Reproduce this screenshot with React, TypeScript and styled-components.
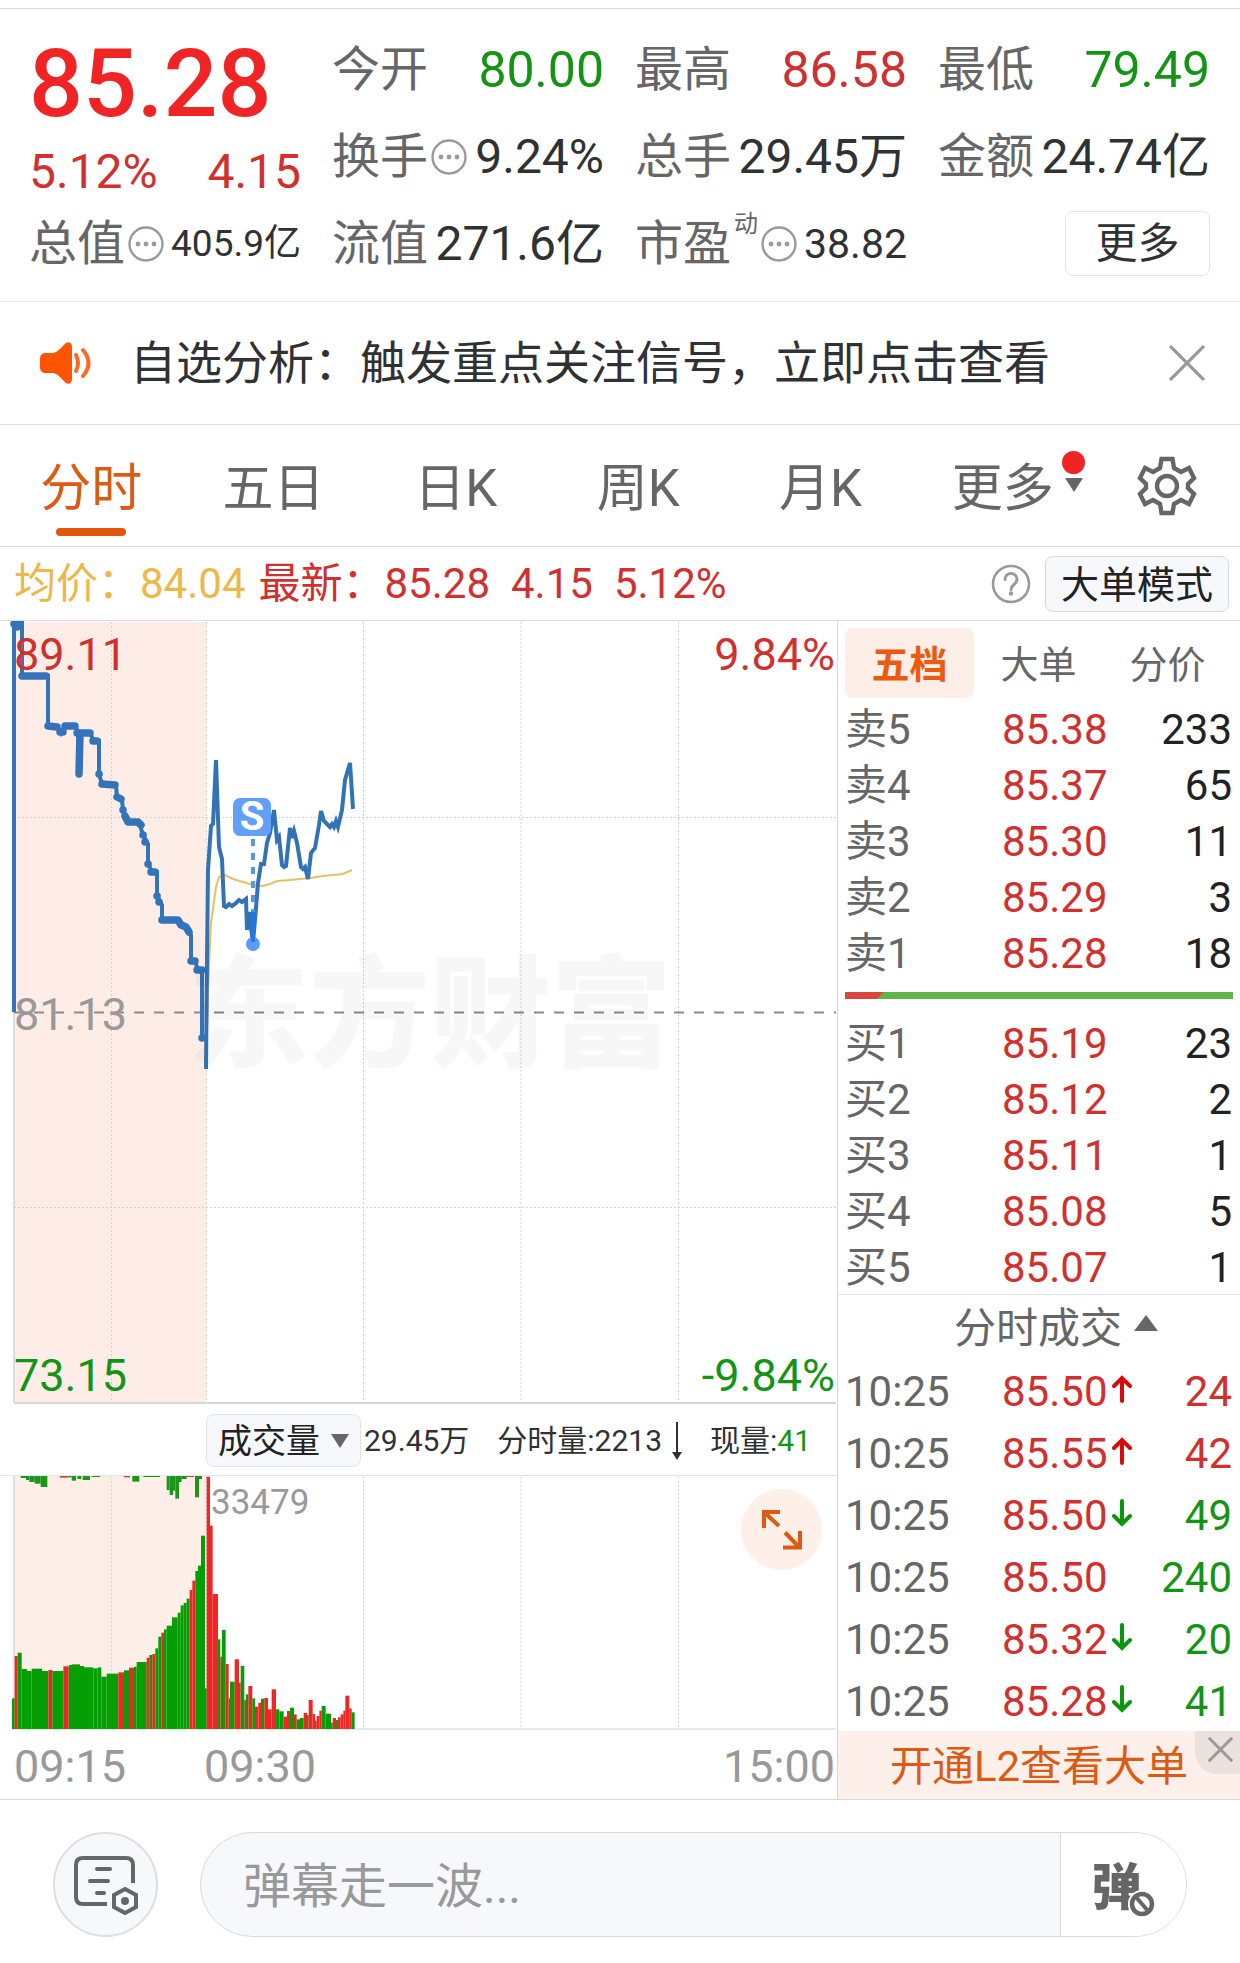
import React from "react";
import styled, { createGlobalStyle, css } from "styled-components";

const color = {
  red: "#d0312f",
  bright: "#f02424",
  green: "#149414",
  label: "#666666",
  text: "#303133",
  muted: "#999999",
  orange: "#dd5a12",
  blush: "#fdeee8",
  fill: "#f6f8fb",
  line: "#dcdcdc",
  edge: "#d5d9de",
};

const GlobalStyle = createGlobalStyle`
  * { box-sizing: border-box; }
  body {
    margin: 0;
    background: #fff;
    color: ${color.text};
    font-family: Roboto, "Noto Sans CJK SC", sans-serif;
  }
  button, input, select {
    font: inherit;
    color: inherit;
    margin: 0;
    padding: 0;
    border: 0;
    background: none;
  }
  svg { display: block; }
`;

type Tone = "red" | "green" | "text" | "muted";

const Page = styled.main`
  padding-top: 8px;
`;

/* ---------- quote summary ---------- */

const Summary = styled.section`
  display: grid;
  grid-template-columns: repeat(4, minmax(0, 1fr));
  grid-auto-rows: 87px;
  column-gap: 31px;
  padding: 17px 30px 14px 29px;
  border-top: 1px solid ${color.edge};
  border-bottom: 1px solid #ebebeb;
`;

const PriceBlock = styled.div`
  grid-row: span 2;
  display: flex;
  flex-direction: column;
  padding-top: 8px;
`;

const BigPrice = styled.strong`
  font-size: 95px;
  line-height: 100px;
  font-weight: 500;
  color: ${color.bright};
`;

const Change = styled.div`
  display: flex;
  justify-content: space-between;
  font-size: 48px;
  line-height: 76px;
  color: ${color.red};
`;

const Stat = styled.div`
  display: flex;
  align-items: center;
  justify-content: space-between;
  line-height: 64px;
  white-space: nowrap;
`;

const StatLabel = styled.span`
  display: flex;
  align-items: center;
  height: 64px;
  gap: 3px;
  font-size: 48px;
  color: ${color.label};
`;

const Sup = styled.span`
  align-self: flex-start;
  font-size: 24px;
  line-height: 24px;
`;

const StatValue = styled.span<{ $tone: Tone; $size: number }>`
  font-size: ${(p) => p.$size}px;
  color: ${(p) => color[p.$tone]};
`;

const MoreCell = styled.div`
  display: flex;
  align-items: center;
  justify-content: flex-end;
`;

const MoreButton = styled.button`
  width: 145px;
  height: 65px;
  border: 1px solid #e3e5e7;
  border-radius: 8px;
  font-size: 42px;
  line-height: 60px;
`;

/* ---------- notice ---------- */

const Notice = styled.section`
  display: flex;
  align-items: center;
  height: 123px;
  padding: 0 35px 0 38px;
  border-bottom: 1px solid ${color.line};
`;

const NoticeText = styled.p`
  flex: 1;
  margin: 0 0 0 38px;
  font-size: 46px;
  line-height: 64px;
  white-space: nowrap;
`;

const IconButton = styled.button`
  display: flex;
  align-items: center;
  justify-content: center;
`;

/* ---------- period tabs ---------- */

const Tabs = styled.nav`
  display: flex;
  height: 122px;
  border-bottom: 1px solid ${color.line};
`;

const Tab = styled.button<{ $active?: boolean }>`
  position: relative;
  flex: 1;
  padding-top: 6px;
  font-size: 51px;
  line-height: 60px;
  color: ${(p) => (p.$active ? color.orange : color.label)};
  ${(p) =>
    p.$active &&
    css`
      &::after {
        content: "";
        position: absolute;
        left: calc(50% - 35px);
        bottom: 10px;
        width: 70px;
        height: 8px;
        border-radius: 4px;
        background: #e2560c;
      }
    `}
`;

const Dot = styled.i`
  position: absolute;
  right: 9px;
  top: 26px;
  width: 23px;
  height: 23px;
  border-radius: 50%;
  background: ${color.bright};
`;

const TabCaret = styled.i`
  position: absolute;
  right: 11px;
  top: 53px;
  border: 9px solid transparent;
  border-top: 14px solid ${color.label};
  border-bottom: 0;
`;

const Settings = styled(IconButton)`
  width: 146px;
`;

/* ---------- price line ---------- */

const InfoBar = styled.section`
  display: flex;
  align-items: center;
  height: 74px;
  padding: 0 11px 0 14px;
  border-bottom: 1px solid ${color.line};
  font-size: 42px;
  line-height: 60px;
  white-space: nowrap;
`;

const Average = styled.span`
  margin-right: 13px;
  color: #edb84a;
`;

const Latest = styled.span`
  display: flex;
  flex: 1;
  gap: 21px;
  color: ${color.red};
`;

const ModeButton = styled.button`
  height: 56px;
  margin-left: 14px;
  padding: 2px 15px 0;
  border: 1px solid ${color.edge};
  border-radius: 8px;
  background: ${color.fill};
  font-size: 38px;
  line-height: 50px;
  color: #222;
`;

/* ---------- charts ---------- */

const Board = styled.div`
  display: grid;
  grid-template-columns: minmax(0, 1fr) 403px;
  border-bottom: 1px solid ${color.edge};
`;

const Charts = styled.section`
  display: flex;
  flex-direction: column;
`;

const Plot = styled.div<{ $height: number }>`
  position: relative;
  height: ${(p) => p.$height}px;
  svg.plot {
    width: 100%;
    height: 100%;
  }
`;

const AxisText = styled.span<{ $tone: Tone; $right?: boolean; $top: number }>`
  position: absolute;
  top: ${(p) => p.$top}px;
  ${(p) => (p.$right ? "right: 2px;" : "left: 14px;")}
  font-size: 45px;
  line-height: 52px;
  color: ${(p) => color[p.$tone]};
`;

const Watermark = styled.span`
  position: absolute;
  left: 188px;
  top: 325px;
  font-size: 121px;
  line-height: 140px;
  font-weight: 900;
  color: rgba(0, 0, 0, 0.03);
  white-space: nowrap;
`;

const SellMark = styled.span`
  position: absolute;
  left: 233px;
  top: 177px;
  width: 38px;
  height: 38px;
  border-radius: 7px;
  background: #629ff8;
  color: #fff;
  font-size: 40px;
  line-height: 38px;
  font-weight: 700;
  text-align: center;
`;

const VolumeBar = styled.div`
  display: flex;
  align-items: center;
  height: 72px;
  padding: 2px 0 0 206px;
  border-bottom: 1px solid #e6e6e6;
  font-size: 30px;
  line-height: 52px;
  white-space: nowrap;
`;

const SelectBox = styled.label`
  position: relative;
  display: flex;
  margin-right: 3px;
  &::after {
    content: "";
    position: absolute;
    right: 12px;
    top: 20px;
    border: 9px solid transparent;
    border-top: 14px solid ${color.label};
    border-bottom: 0;
    pointer-events: none;
  }
`;

const IndicatorSelect = styled.select`
  appearance: none;
  width: 155px;
  height: 53px;
  padding: 0 0 2px 11px;
  border: 1px solid #e1e5ea;
  border-radius: 8px;
  background: ${color.fill};
  font-size: 34px;
  color: #222;
`;

const VolumeItem = styled.span`
  display: flex;
  align-items: center;
  gap: 10px;
  margin-right: 28px;
`;

const Now = styled.b`
  margin-left: -10px;
  font-weight: 400;
  color: ${color.green};
`;

const MaxVolume = styled.span`
  position: absolute;
  left: 211px;
  top: 7px;
  font-size: 35px;
  line-height: 40px;
  color: ${color.muted};
`;

const Expand = styled.button`
  position: absolute;
  right: 15px;
  top: 13px;
  width: 81px;
  height: 81px;
  padding: 20px;
  border-radius: 50%;
  background: #fef0e9;
`;

const TimeAxis = styled.div`
  display: grid;
  grid-template-columns: 190px 1fr auto;
  height: 69px;
  padding: 0 2px 0 14px;
  font-size: 45px;
  line-height: 73px;
  color: ${color.muted};
`;

/* ---------- order book ---------- */

const Side = styled.aside`
  border-left: 1px solid ${color.edge};
`;

const SideTabs = styled.div`
  display: flex;
  padding: 7px 8px 2px 7px;
`;

const SideTab = styled.button<{ $active?: boolean }>`
  flex: 1;
  height: 70px;
  padding-top: 4px;
  border-radius: 8px;
  font-size: 38px;
  line-height: 60px;
  font-weight: ${(p) => (p.$active ? 700 : 400)};
  color: ${(p) => (p.$active ? "#ea5b10" : color.label)};
  background: ${(p) => (p.$active ? color.blush : "transparent")};
`;

const Quotes = styled.table<{ $row: number }>`
  width: 100%;
  table-layout: fixed;
  border-collapse: collapse;
  font-size: 42px;
  line-height: 50px;
  th,
  td {
    height: ${(p) => p.$row}px;
    padding: 4px 0 0;
    font-weight: 400;
    text-align: left;
    white-space: nowrap;
  }
  th {
    width: 164px;
    padding-left: 7px;
    color: ${color.label};
  }
`;

const Price = styled.td`
  color: ${color.red};
  svg {
    display: inline-block;
    margin-left: 4px;
    vertical-align: 3px;
  }
`;

const Count = styled.td<{ $tone: Tone }>`
  && {
    width: 90px;
    padding-right: 8px;
    text-align: right;
    color: ${(p) => (p.$tone === "text" ? "#222" : color[p.$tone])};
  }
`;

const Ratio = styled.div`
  height: 7px;
  margin: 12px 7px 15px;
  background: linear-gradient(135deg, #d9453f 27px, #5fb548 28px);
`;

const TradesHead = styled.button`
  display: flex;
  align-items: center;
  justify-content: center;
  gap: 12px;
  width: 100%;
  height: 65px;
  padding: 4px 0 0 34px;
  border-top: 1px solid #e6e6e6;
  font-size: 42px;
  line-height: 60px;
  color: ${color.label};
`;

const UpCaret = styled.i`
  margin-bottom: 12px;
  border: 12px solid transparent;
  border-bottom: 16px solid ${color.label};
  border-top: 0;
`;

const Promo = styled.div`
  position: relative;
  height: 68px;
  padding-top: 3px;
  background: #fdf0ea;
  text-align: center;
`;

const PromoLink = styled.a`
  font-size: 42px;
  line-height: 65px;
  color: ${color.orange};
  text-decoration: none;
`;

const PromoClose = styled(IconButton)`
  position: absolute;
  right: 0;
  top: 0;
  width: 45px;
  height: 43px;
  padding: 0 0 6px 6px;
  border-bottom-left-radius: 22px;
  background: #ebe2dd;
`;

/* ---------- comment bar ---------- */

const Composer = styled.form`
  display: flex;
  align-items: center;
  gap: 42px;
  padding: 32px 53px 26px;
`;

const NoteButton = styled(IconButton)`
  width: 105px;
  height: 105px;
  border: 2px solid #dcdee2;
  border-radius: 50%;
  background: ${color.fill};
`;

const Field = styled.div`
  display: flex;
  flex: 1;
  height: 105px;
  border: 1px solid ${color.edge};
  border-radius: 53px;
  background: ${color.fill};
  overflow: hidden;
`;

const CommentInput = styled.input`
  flex: 1;
  min-width: 0;
  padding: 4px 0 0 42px;
  font-size: 48px;
  outline: 0;
  &::placeholder {
    color: ${color.muted};
    opacity: 1;
  }
`;

const Danmu = styled.button`
  position: relative;
  width: 126px;
  padding: 0 14px 4px 0;
  border-left: 1px solid ${color.edge};
  background: #fff;
  font-size: 50px;
  font-weight: 900;
  color: ${color.label};
  svg {
    position: absolute;
    left: 66px;
    top: 56px;
  }
`;

/* ---------- icons ---------- */

const MoreDots = () => (
  <svg width="36" height="36" viewBox="0 0 36 36" fill="none">
    <circle cx="18" cy="16" r="16" stroke="#999" strokeWidth="0" />
    <circle cx="18" cy="18" r="16.500" stroke="#999" strokeWidth="2.400" />
    <circle cx="10" cy="18" r="2.400" fill="#999" />
    <circle cx="18" cy="18" r="2.400" fill="#999" />
    <circle cx="26" cy="18" r="2.400" fill="#999" />
  </svg>
);

const Speaker = () => (
  <svg width="54" height="44" viewBox="0 0 54 44" fill="none">
    <path
      d="M8 12h7c7-2 8-6 13-10 3-2 6 0 6 4v32c0 4-3 6-6 4-5-4-6-8-13-10H8c-4 0-6-2-6-6v-8c0-4 2-6 6-6z"
      fill="#ff5500"
    />
    <path d="M38 14q4 8 0 16" stroke="#ff6a20" strokeWidth="4" strokeLinecap="round" />
    <path d="M45 9q11 13 0 26" stroke="#ff6a20" strokeWidth="4" strokeLinecap="round" />
  </svg>
);

const Cross = ({ size, weight }: { size: number; weight: number }) => (
  <svg width={size} height={size} viewBox="0 0 34 34" fill="none">
    <path d="M1 1l32 32M33 1L1 33" stroke="#999" strokeWidth={weight} />
  </svg>
);

const Gear = () => (
  <svg width="60" height="60" viewBox="0 0 60 60" fill="none" stroke={color.label} strokeWidth="4.400">
    <path d="M24.500 3h11l1.500 9 7 4 8-4 5 10-6 6v4l6 6-5 10-8-4-7 4-1.500 9h-11L23 48l-7-4-8 4-5-10 6-6v-4l-6-6 5-10 8 4 7-4z" />
    <circle cx="30" cy="30" r="10" />
  </svg>
);

const Help = () => (
  <svg width="40" height="40" viewBox="0 0 40 40" fill="none" stroke="#999">
    <circle cx="20" cy="20" r="18" strokeWidth="2.600" />
    <path d="M14 15.500c0-8 12-8 12 0 0 5-6 5-6 10" strokeWidth="3" strokeLinecap="round" />
    <circle cx="20" cy="29.500" r="1.200" strokeWidth="2" />
  </svg>
);

const ExpandIcon = () => (
  <svg width="41" height="41" viewBox="0 0 41 41" fill="none" stroke={color.orange} strokeWidth="4">
    <path d="M19 3H3v16M4 4l14 13M24 23.500L37 37M22 38.500h17V22" />
  </svg>
);

const Arrow = ({ up }: { up: boolean }) => (
  <svg width="20" height="28" viewBox="0 0 20 28" fill="none" stroke={up ? "#d90a0a" : "#0d960d"} strokeWidth="4" strokeLinecap="round">
    {up ? <path d="M10 26V3M2 11l8-8 8 8" /> : <path d="M10 2v23M2 17l8 8 8-8" />}
  </svg>
);

const ThinDown = () => (
  <svg width="10" height="38" viewBox="0 0 10 38">
    <path d="M4 0h2v30h4l-5 8-5-8h4z" fill={color.text} />
  </svg>
);

const NoteIcon = () => (
  <svg width="66" height="60" viewBox="0 0 66 60" fill="none" stroke={color.label} strokeWidth="4" strokeLinecap="round">
    <path d="M60 28V10q0-7-7-7H10q-7 0-7 7v32q0 7 7 7h24" strokeLinecap="butt" />
    <path d="M24 14h13M17 26h18M24 38h7" />
    <path d="M52 34l11 6v12l-11 6-11-6V40z" />
    <circle cx="52" cy="46" r="2" />
  </svg>
);

const Ban = () => (
  <svg width="30" height="30" viewBox="0 0 30 30" fill="none">
    <circle cx="15" cy="15" r="14" fill="#fff" />
    <circle cx="15" cy="15" r="10" stroke={color.label} strokeWidth="4.500" />
    <path d="M9 8l12 14" stroke={color.label} strokeWidth="4" />
  </svg>
);

/* ---------- chart data ---------- */

const gridX = [111.5, 206.5, 363.5, 521, 678.5];

const auctionLine =
  "M14 1012V623H22V676H48V726L58 727 61 733 65 726H75L79 733H90L94 741H99V774L102 784 116 785 117 797 122 800 123 810 128 822H139L143 835 148 844V863L152 872H157V896L162 905V920H178L186 927 191 935V961H195L198 970H202V1039";

const auctionDots =
  "M14 624H20M16 627H17M22 676H46M48 726L57 727M60 732H63M65 726H75M77 733H90M93 741H97M80 733L79 774M99 774h.1M102 784L115 785M117 797L121 799M123 810h.1M125 816L128 822H138L141 825M143 835h.1M145 842h.1M148 864h.1M151 872H155M157 896h.1M159 902h.1M162 920H178L181 925 186 927 189 932M191 961H195M197 970H202M202 1038h.1";

const tradeLine =
  "206,1069 207,960 208,870 211,826 213,824 216,760 219,847 222,859 224,906 226,907 229,904 232,906 235,904 239,900 242,902 246,899 247,930 249,912 253,943 256,908 258,883 261,864 264,864 267,843 270,833 274,810 277,840 279,837 282,865 284,867 286,866 290,828 292,838 294,831 297,843 301,867 303,869 305,867 308,879 311,853 315,848 319,825 321,811 324,821 327,824 330,827 332,824 334,827 336,821 338,827 342,810 345,780 350,763 353,809";

const averageLine =
  "206,1069 208,990 211,923 216,887 219,877 225,875 233,879 243,882 253,885 262,886 270,884 277,881 290,880 310,878 323,876 343,874 352,870";

/* each bar: left edge, right edge, top edge, rising (1) or falling (0) */
const volumes: number[][] = [
  [36, 44, 1015, 0], [44, 53, 888, 1], [53, 65, 878, 0], [65, 81, 927, 0], [81, 95, 933, 0],
  [95, 126, 926, 0], [126, 145, 933, 0], [145, 157, 930, 1], [157, 190, 933, 0], [190, 206, 919, 1],
  [206, 216, 915, 0], [216, 240, 913, 0], [240, 252, 918, 0], [252, 280, 922, 0], [280, 293, 925, 0],
  [293, 304, 922, 0], [304, 320, 950, 0], [320, 355, 941, 0], [355, 372, 937, 1], [372, 387, 931, 0],
  [387, 402, 923, 1], [402, 410, 920, 0], [410, 440, 906, 0], [440, 448, 893, 1], [448, 457, 885, 0],
  [457, 466, 882, 1], [466, 475, 865, 0], [475, 484, 830, 0], [484, 492, 818, 1], [492, 500, 808, 0],
  [500, 516, 797, 0], [516, 533, 772, 0], [533, 542, 758, 0], [542, 551, 736, 0], [551, 560, 729, 0],
  [560, 569, 716, 0], [569, 577, 690, 1], [577, 586, 662, 1], [586, 594, 633, 0], [594, 603, 617, 0],
  [603, 615, 527, 0], [615, 620, 985, 0], [620, 630, 350, 1], [630, 638, 497, 1], [638, 654, 702, 1],
  [654, 661, 838, 0], [661, 666, 890, 1], [666, 677, 810, 0], [677, 686, 912, 1], [686, 690, 1015, 1],
  [690, 704, 965, 0], [704, 717, 898, 1], [717, 722, 968, 1], [722, 733, 918, 0], [733, 738, 1020, 1],
  [738, 745, 1003, 0], [745, 757, 978, 1], [757, 765, 1015, 0], [765, 775, 1040, 1], [775, 783, 1028, 1],
  [783, 793, 1016, 0], [793, 804, 1014, 1], [804, 815, 1048, 1], [815, 828, 988, 1], [828, 838, 1048, 0],
  [838, 851, 1054, 0], [851, 861, 1070, 1], [861, 870, 1053, 1], [870, 882, 1043, 0], [882, 890, 1063, 1],
  [890, 900, 1078, 0], [900, 911, 1074, 0], [911, 921, 1059, 1], [921, 926, 1065, 0], [926, 938, 1020, 1],
  [938, 945, 1062, 1], [945, 950, 1082, 1], [950, 958, 1068, 1], [958, 965, 1052, 1], [965, 977, 1038, 0],
  [977, 993, 1061, 0], [993, 998, 1088, 0], [998, 1008, 1074, 1], [1008, 1014, 1080, 0], [1014, 1022, 1072, 1],
  [1022, 1030, 1063, 1], [1030, 1036, 1052, 1], [1036, 1048, 1007, 1], [1048, 1055, 1045, 1], [1055, 1064, 1057, 0],
];

/* unmatched orders hang from the top edge: left, right, bottom, colour flag */
const unmatched: number[][] = [
  [62, 78, 354, 0], [78, 88, 360, 0], [88, 104, 366, 0], [104, 122, 371, 0], [122, 142, 381, 0],
  [180, 205, 353, 1], [205, 215, 352, 0], [215, 228, 362, 0], [232, 244, 357, 0], [248, 270, 360, 0],
  [275, 300, 351, 0], [372, 390, 352, 1], [397, 418, 365, 0], [430, 480, 351, 0], [500, 509, 390, 0],
  [509, 519, 405, 0], [519, 526, 392, 0], [526, 537, 416, 0], [537, 545, 366, 0], [545, 560, 357, 0],
  [560, 582, 351, 1], [585, 597, 412, 0], [597, 606, 357, 0],
];

const PriceChart = () => (
  <Plot $height={783}>
    <Watermark>东方财富</Watermark>
    <svg className="plot" viewBox="0 621 837 783" preserveAspectRatio="none" fill="none">
      <rect x="14" y="622" width="192" height="781" fill="#f9b495" fillOpacity="0.24" />
      <path d="M14 1012V1403" stroke="#d4d4d4" strokeWidth="1.500" />
      <g stroke="#d2d2d2" strokeDasharray="2 2">
        {gridX.map((x) => (
          <path key={x} d={`M${x} 622V1402`} />
        ))}
        <path d="M14 817.500H836M14 1207.500H836" />
      </g>
      <path d="M14 1012.500H836" stroke="#8c8c8c" strokeWidth="2" strokeDasharray="10 10" />
      <path d="M14 1403H836" stroke="#d6d6d6" strokeWidth="2" />
      <polyline points={averageLine} stroke="#e8bf66" strokeWidth="2" />
      <path d={auctionLine} stroke="#3373ba" strokeWidth="4" />
      <path d={auctionDots} stroke="#3373ba" strokeWidth="7.500" strokeLinecap="round" strokeLinejoin="round" />
      <polyline points={tradeLine} stroke="#3373b5" strokeWidth="4" />
      <path d="M253 839V915" stroke="#5a97dd" strokeWidth="4" strokeDasharray="7 7" />
      <circle cx="253" cy="944" r="7" fill="#5a9bf5" />
      <path d="M253 912V942" stroke="#2277e6" strokeWidth="4" />
    </svg>
    <AxisText $tone="red" $top={8}>89.11</AxisText>
    <AxisText $tone="red" $top={8} $right>9.84%</AxisText>
    <AxisText $tone="muted" $top={368}>81.13</AxisText>
    <AxisText $tone="green" $top={729}>73.15</AxisText>
    <AxisText $tone="green" $top={729} $right>-9.84%</AxisText>
    <SellMark>S</SellMark>
  </Plot>
);

const VolumeChart = () => (
  <Plot $height={254}>
    <svg className="plot" viewBox="0 348 2511 762" preserveAspectRatio="none" fill="none">
      <rect x="42" y="348" width="577" height="759" fill="#fdeee8" />
      <path d="M42 348V1107" stroke="#d4d4d4" strokeWidth="4" />
      <g stroke="#d2d2d2" strokeWidth="3" strokeDasharray="6 6">
        {gridX.map((x) => (
          <path key={x} d={`M${x * 3} 350V1105`} />
        ))}
      </g>
      <path d="M36 1107H2508" stroke="#e0e0e0" strokeWidth="5" />
      {volumes.map(([a, b, y, up]) => (
        <rect key={a} x={a} y={y} width={b - a} height={1107 - y} fill={up ? "#ee2626" : "#059f05"} />
      ))}
      {unmatched.map(([a, b, y, up]) => (
        <rect key={a} x={a} y={348} width={b - a} height={y - 348} fill={up ? "#cf4433" : "#1a961a"} />
      ))}
    </svg>
    <MaxVolume>33479</MaxVolume>
    <Expand type="button" aria-label="全屏">
      <ExpandIcon />
    </Expand>
  </Plot>
);

/* ---------- tables ---------- */

const asks = [["卖5", "85.38", "233"], ["卖4", "85.37", "65"], ["卖3", "85.30", "11"], ["卖2", "85.29", "3"], ["卖1", "85.28", "18"]];
const bids = [["买1", "85.19", "23"], ["买2", "85.12", "2"], ["买3", "85.11", "1"], ["买4", "85.08", "5"], ["买5", "85.07", "1"]];

const trades: { price: string; dir?: "up" | "down"; count: string; tone: Tone }[] = [
  { price: "85.50", dir: "up", count: "24", tone: "red" },
  { price: "85.55", dir: "up", count: "42", tone: "red" },
  { price: "85.50", dir: "down", count: "49", tone: "green" },
  { price: "85.50", count: "240", tone: "green" },
  { price: "85.32", dir: "down", count: "20", tone: "green" },
  { price: "85.28", dir: "down", count: "41", tone: "green" },
];

const Depth = ({ rows }: { rows: string[][] }) => (
  <Quotes $row={56}>
    <tbody>
      {rows.map(([name, price, count]) => (
        <tr key={name}>
          <th scope="row">{name}</th>
          <Price>{price}</Price>
          <Count $tone="text">{count}</Count>
        </tr>
      ))}
    </tbody>
  </Quotes>
);

type StatProps = { label: string; value: string; tone?: Tone; size?: number; sup?: string; info?: boolean };

const StatCell = ({ label, value, tone = "text", size = 48, sup, info }: StatProps) => (
  <Stat>
    <StatLabel>
      {label}
      {sup && <Sup>{sup}</Sup>}
      {info && <MoreDots />}
    </StatLabel>
    <StatValue $tone={tone} $size={size}>{value}</StatValue>
  </Stat>
);

export default function App() {
  return (
    <Page lang="zh-CN">
      <GlobalStyle />
      <Summary>
        <PriceBlock>
          <BigPrice>85.28</BigPrice>
          <Change>
            <span>5.12%</span>
            <span>4.15</span>
          </Change>
        </PriceBlock>
        <StatCell label="今开" value="80.00" tone="green" size={50} />
        <StatCell label="最高" value="86.58" tone="red" size={50} />
        <StatCell label="最低" value="79.49" tone="green" size={50} />
        <StatCell label="换手" value="9.24%" info />
        <StatCell label="总手" value="29.45万" />
        <StatCell label="金额" value="24.74亿" />
        <StatCell label="总值" value="405.9亿" size={37} info />
        <StatCell label="流值" value="271.6亿" />
        <StatCell label="市盈" value="38.82" size={41} sup="动" info />
        <MoreCell>
          <MoreButton type="button">更多</MoreButton>
        </MoreCell>
      </Summary>

      <Notice>
        <Speaker />
        <NoticeText>自选分析：触发重点关注信号，立即点击查看</NoticeText>
        <IconButton type="button" aria-label="关闭">
          <Cross size={36} weight={3} />
        </IconButton>
      </Notice>

      <Tabs>
        <Tab type="button" $active>分时</Tab>
        <Tab type="button">五日</Tab>
        <Tab type="button">日K</Tab>
        <Tab type="button">周K</Tab>
        <Tab type="button">月K</Tab>
        <Tab type="button">
          更多
          <Dot />
          <TabCaret />
        </Tab>
        <Settings type="button" aria-label="设置">
          <Gear />
        </Settings>
      </Tabs>

      <InfoBar>
        <Average>均价：84.04</Average>
        <Latest>
          <span>最新：85.28</span>
          <span>4.15</span>
          <span>5.12%</span>
        </Latest>
        <IconButton type="button" aria-label="帮助">
          <Help />
        </IconButton>
        <ModeButton type="button">大单模式</ModeButton>
      </InfoBar>

      <Board>
        <Charts>
          <PriceChart />
          <VolumeBar>
            <SelectBox>
              <IndicatorSelect aria-label="指标">
                <option>成交量</option>
              </IndicatorSelect>
            </SelectBox>
            <VolumeItem>29.45万</VolumeItem>
            <VolumeItem>
              分时量:2213
              <ThinDown />
            </VolumeItem>
            <VolumeItem>
              现量:<Now>41</Now>
            </VolumeItem>
          </VolumeBar>
          <VolumeChart />
          <TimeAxis>
            <span>09:15</span>
            <span>09:30</span>
            <span>15:00</span>
          </TimeAxis>
        </Charts>

        <Side>
          <SideTabs>
            <SideTab type="button" $active>五档</SideTab>
            <SideTab type="button">大单</SideTab>
            <SideTab type="button">分价</SideTab>
          </SideTabs>
          <Depth rows={asks} />
          <Ratio />
          <Depth rows={bids} />
          <TradesHead type="button">
            分时成交
            <UpCaret />
          </TradesHead>
          <Quotes $row={62}>
            <tbody>
              {trades.map((t, i) => (
                <tr key={i}>
                  <th scope="row">10:25</th>
                  <Price>
                    {t.price}
                    {t.dir && <Arrow up={t.dir === "up"} />}
                  </Price>
                  <Count $tone={t.tone}>{t.count}</Count>
                </tr>
              ))}
            </tbody>
          </Quotes>
          <Promo>
            <PromoLink href="#l2">开通L2查看大单</PromoLink>
            <PromoClose type="button" aria-label="关闭推广">
              <Cross size={25} weight={4} />
            </PromoClose>
          </Promo>
        </Side>
      </Board>

      <Composer>
        <NoteButton type="button" aria-label="弹幕设置">
          <NoteIcon />
        </NoteButton>
        <Field>
          <CommentInput type="text" aria-label="弹幕" placeholder="弹幕走一波..." />
          <Danmu type="button">
            弹
            <Ban />
          </Danmu>
        </Field>
      </Composer>
    </Page>
  );
}
